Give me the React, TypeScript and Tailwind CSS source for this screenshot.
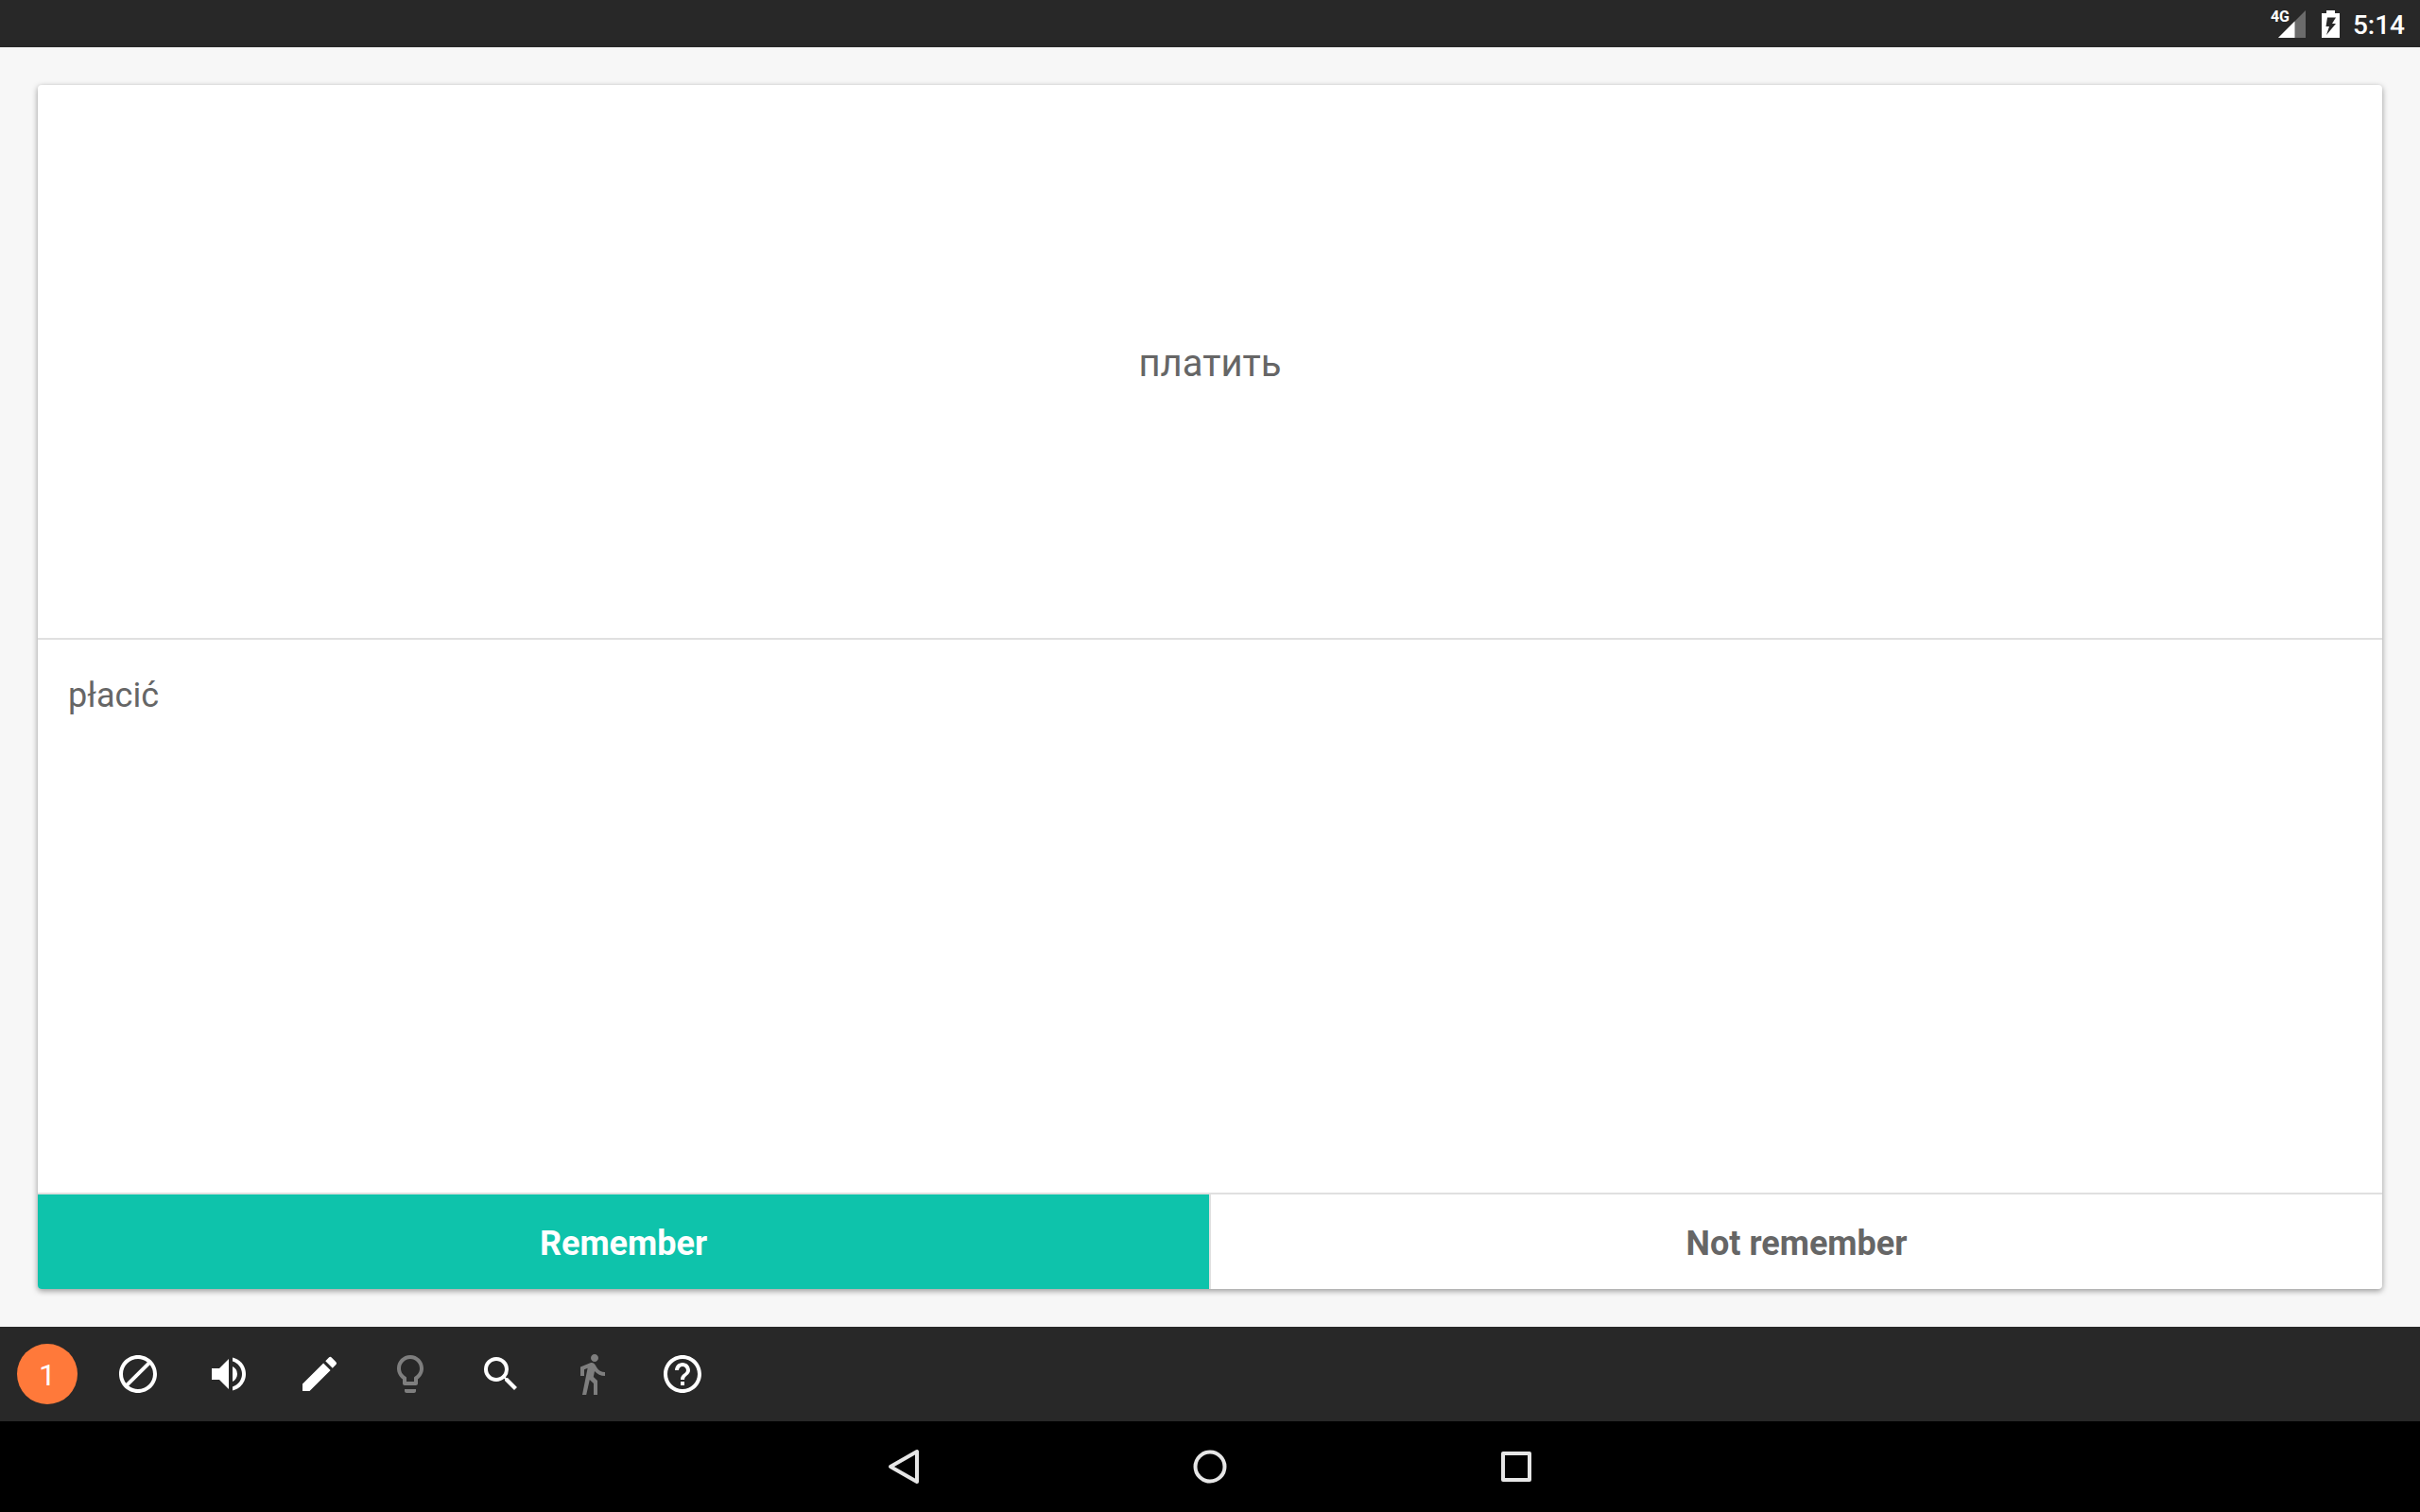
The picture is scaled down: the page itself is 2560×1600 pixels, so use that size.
import type { ReactNode } from "react";
import {
  MdBlock,
  MdDirectionsWalk,
  MdEdit,
  MdHelpOutline,
  MdLightbulbOutline,
  MdSearch,
  MdVolumeUp,
} from "react-icons/md";

function SignalIcon() {
  return (
    <svg viewBox="0 0 30 30" className="size-[30px]" aria-hidden="true">
      <path d="M29 1V30H0z" fill="#6b6b6b" />
      <path d="M17.500 12.500V30H0z" fill="#fff" />
    </svg>
  );
}

function BatteryIcon() {
  return (
    <svg viewBox="0 0 19 29" className="h-[29px] w-[19px]" aria-hidden="true">
      <path
        fillRule="evenodd"
        fill="#fff"
        d="M5 0h9v3h5v26H0V3h5zM6 7.500L4.500 17H8l-3 9L15 14h-4l4-6.500z"
      />
    </svg>
  );
}

function StatusBar() {
  return (
    <header className="flex h-[50px] shrink-0 items-center justify-end bg-[#282828] pr-4 text-white">
      <div className="relative mr-4">
        <span className="absolute -top-0.5 -left-2 text-[16px] leading-5 font-bold">4G</span>
        <SignalIcon />
      </div>
      <BatteryIcon />
      <time className="ml-3.5 pt-1 text-[28px] leading-8 font-medium">5:14</time>
    </header>
  );
}

function Flashcard() {
  return (
    <section className="flex flex-1 flex-col overflow-hidden rounded bg-white shadow-[0_2px_6px_rgba(0,0,0,0.4)]">
      <div className="flex grow basis-0 items-center justify-center text-[40px]">
        <p className="pt-1">платить</p>
      </div>
      <div className="grow basis-0 border-t-2 border-[#e0e0e0] text-[36px] leading-[54px]">
        <p className="p-8">płacić</p>
      </div>
      <div className="grid h-[102px] grid-cols-2 border-t-2 border-[#e0e0e0] text-[36px] font-bold">
        <button type="button" className="border-r border-[#e0e0e0] bg-[#0ec3ab] pt-1 text-white">
          Remember
        </button>
        <button type="button" className="border-l border-[#e0e0e0] pt-1">
          Not remember
        </button>
      </div>
    </section>
  );
}

function Tool({ label, disabled, children }: { label: string; disabled?: boolean; children: ReactNode }) {
  return (
    <button
      type="button"
      aria-label={label}
      disabled={disabled}
      className="flex w-24 items-center justify-center text-[48px] text-white disabled:text-[#7e7e7e]"
    >
      {children}
    </button>
  );
}

function Toolbar() {
  return (
    <div role="toolbar" className="flex h-[100px] shrink-0 bg-[#282828] pl-0.5">
      <Tool label="1 card">
        <span className="flex size-16 items-center justify-center rounded-full bg-[#ff793a] pt-0.5 text-[32px]">
          1
        </span>
      </Tool>
      <Tool label="Block"><MdBlock /></Tool>
      <Tool label="Play sound"><MdVolumeUp /></Tool>
      <Tool label="Edit"><MdEdit /></Tool>
      <Tool label="Hint" disabled><MdLightbulbOutline /></Tool>
      <Tool label="Search"><MdSearch /></Tool>
      <Tool label="Walk" disabled><MdDirectionsWalk /></Tool>
      <Tool label="Help"><MdHelpOutline /></Tool>
    </div>
  );
}

function NavButton({ label, children }: { label: string; children: ReactNode }) {
  return (
    <button type="button" aria-label={label} className="flex w-[324px] items-center justify-center">
      <svg
        viewBox="0 0 40 40"
        className="size-10"
        fill="none"
        stroke="#e6e6e6"
        strokeWidth="4"
        strokeLinejoin="round"
        aria-hidden="true"
      >
        {children}
      </svg>
    </button>
  );
}

export default function App() {
  return (
    <div className="flex min-h-screen flex-col bg-[#f7f7f7] font-['Roboto',sans-serif] text-[#666666]">
      <StatusBar />
      <main className="flex flex-1 flex-col p-10">
        <Flashcard />
      </main>
      <Toolbar />
      <nav className="flex h-24 shrink-0 justify-center bg-black">
        <NavButton label="Back">
          <path d="M34 4V36L6 20z" />
        </NavButton>
        <NavButton label="Home">
          <circle cx="20" cy="20" r="15.500" strokeWidth="4" />
        </NavButton>
        <NavButton label="Recent apps">
          <rect x="6" y="6" width="28" height="28" />
        </NavButton>
      </nav>
    </div>
  );
}
